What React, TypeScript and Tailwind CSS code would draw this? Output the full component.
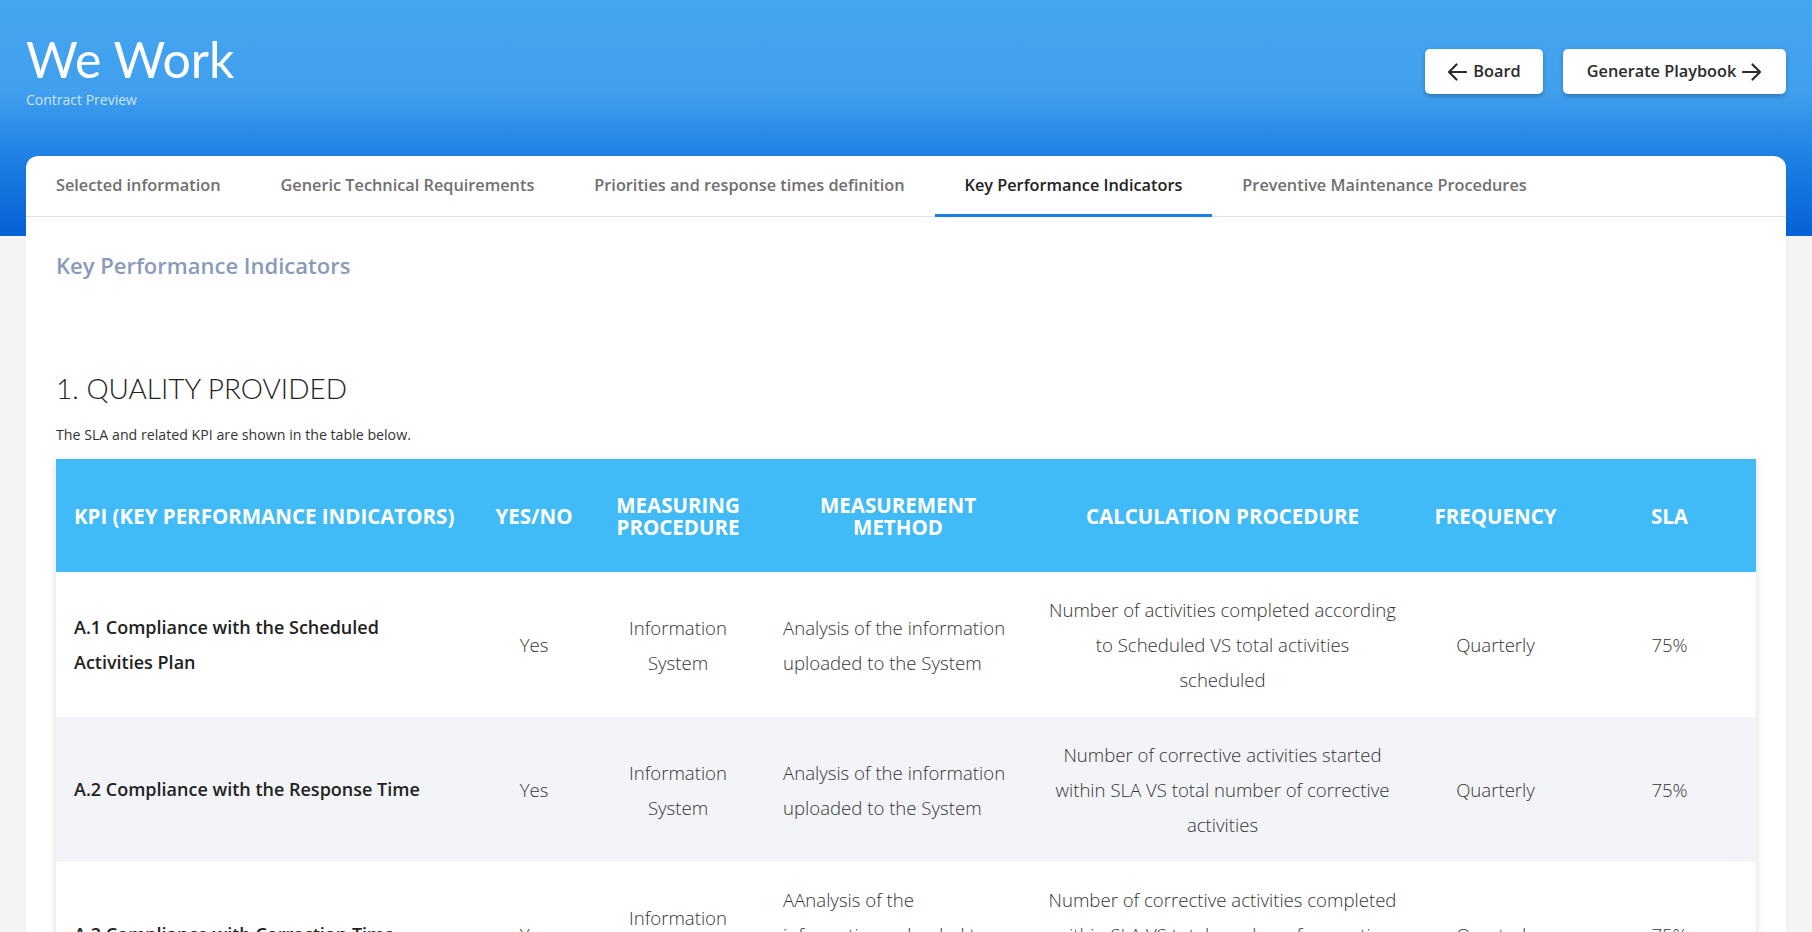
import { ReactNode } from 'react'

const TABS = [
  'Selected information',
  'Generic Technical Requirements',
  'Priorities and response times definition',
  'Key Performance Indicators',
  'Preventive Maintenance Procedures',
]

// lines are kept as in the contract preview so the cells wrap the same way
const ROWS = [
  {
    kpi: 'A.1 Compliance with the Scheduled Activities Plan',
    yes: 'Yes',
    procedure: ['Information', 'System'],
    method: ['Analysis of the information', 'uploaded to the System'],
    calc: ['Number of activities completed according', 'to Scheduled VS total activities', 'scheduled'],
    frequency: 'Quarterly',
    sla: '75%',
  },
  {
    kpi: 'A.2 Compliance with the Response Time',
    yes: 'Yes',
    procedure: ['Information', 'System'],
    method: ['Analysis of the information', 'uploaded to the System'],
    calc: ['Number of corrective activities started', 'within SLA VS total number of corrective', 'activities'],
    frequency: 'Quarterly',
    sla: '75%',
  },
  {
    kpi: 'A.3 Compliance with Correction Time',
    yes: 'Yes',
    procedure: ['Information', 'System'],
    method: ['AAnalysis of the', 'information uploaded to', 'the System'],
    calc: ['Number of corrective activities completed', 'within SLA VS total number of corrective', 'activities'],
    frequency: 'Quarterly',
    sla: '75%',
  },
]

function ArrowLeft() {
  return (
    <svg width="20" height="18" viewBox="0 0 20 18" fill="none" stroke="#2b2b2b" strokeWidth="2.2" strokeLinecap="round" strokeLinejoin="round">
      <path d="M19 9H2M9.5 1.5L2 9l7.5 7.5" />
    </svg>
  )
}

function ArrowRight() {
  return (
    <svg width="20" height="18" viewBox="0 0 20 18" fill="none" stroke="#2b2b2b" strokeWidth="2.2" strokeLinecap="round" strokeLinejoin="round">
      <path d="M1 9h17M10.5 1.5L18 9l-7.5 7.5" />
    </svg>
  )
}

function HeaderButton({ children, width }: { children: ReactNode; width: string }) {
  return (
    <button
      className={`${width} h-[45px] flex items-center justify-center gap-[6px] bg-white rounded-[5px] shadow-[0_2px_4px_rgba(0,0,0,0.25)] text-[16.3px] font-semibold text-[#2b2b2b]`}
    >
      {children}
    </button>
  )
}

function Lines({ lines }: { lines: string[] }) {
  return (
    <>
      {lines.map((l) => (
        <span key={l} className="block whitespace-nowrap">
          {l}
        </span>
      ))}
    </>
  )
}

export default function App() {
  return (
    <div className="min-h-screen bg-[#f4f4f4] font-['Open_Sans','Lato',sans-serif]">
      {/* Blue header */}
      <div className="h-[236px] px-[26px] pt-[34px] flex justify-between items-start bg-[linear-gradient(to_bottom,#44a5f0_0%,#41a0ee_38%,#1a7de2_70%,#0561d6_100%)]">
        <div>
          <h1 className="font-['Lato',sans-serif] text-[50px] leading-[50px] text-white">We Work</h1>
          <p className="mt-[7px] text-[14px] leading-[18px] text-white/75">Contract Preview</p>
        </div>
        <div className="mt-[15px] flex gap-5">
          <HeaderButton width="w-[118px]">
            <ArrowLeft />
            <span>Board</span>
          </HeaderButton>
          <HeaderButton width="w-[223px]">
            <span>Generate Playbook</span>
            <ArrowRight />
          </HeaderButton>
        </div>
      </div>

      {/* Card */}
      <div className="-mt-[80px] px-[26px]">
        <div className="bg-white rounded-t-[12px] shadow-[0_0_2px_rgba(0,0,0,0.08)] pb-10">
          {/* Tabs */}
          <div className="h-[61px] flex border-b border-[#e2e2e2]">
            {TABS.map((tab) => {
              const active = tab === 'Key Performance Indicators'
              return (
                <div
                  key={tab}
                  className={`px-[30px] flex items-center text-[16.3px] font-semibold -mb-px border-b-[3px] ${
                    active ? 'border-[#1b7de6] text-[#222]' : 'border-transparent text-[#707070]'
                  }`}
                >
                  {tab}
                </div>
              )
            })}
          </div>

          <div className="px-[30px]">
            <h2 className="pt-[34px] text-[22px] leading-[28px] font-semibold text-[#8a9bb9]">
              Key Performance Indicators
            </h2>

            <h3 className="mt-[91px] font-['Lato',sans-serif] text-[28px] leading-[36px] font-light text-[#222]">
              1. QUALITY PROVIDED
            </h3>
            <p className="mt-[19px] text-[14.2px] leading-[20px] text-[#333]">
              The SLA and related KPI are shown in the table below.
            </p>

            <table className="mt-[14px] w-full table-fixed border-collapse shadow-[0_2px_8px_rgba(0,0,0,0.14)]">
              <colgroup>
                <col className="w-[415px]" />
                <col className="w-[126px]" />
                <col className="w-[162px]" />
                <col className="w-[278px]" />
                <col className="w-[371px]" />
                <col className="w-[175px]" />
                <col />
              </colgroup>
              <thead>
                <tr className="h-[113px] bg-[#41bbf7] text-white text-[20.5px] leading-[22px] font-bold uppercase">
                  <th className="px-[18px] text-left whitespace-nowrap">KPI (Key Performance Indicators)</th>
                  <th className="px-[10px] text-center">Yes/No</th>
                  <th className="px-[10px] text-center">Measuring Procedure</th>
                  <th className="px-[24px] text-center">Measurement Method</th>
                  <th className="px-[8px] text-center">Calculation Procedure</th>
                  <th className="px-[10px] text-center">Frequency</th>
                  <th className="px-[10px] text-center">SLA</th>
                </tr>
              </thead>
              <tbody className="text-[18.6px] leading-[35px] font-light text-[#333]">
                {ROWS.map((row, i) => (
                  <tr key={row.kpi} className={`h-[145px] ${i % 2 === 1 ? 'bg-[#f3f4f8]' : 'bg-white'}`}>
                    <td className="px-[18px] text-[18px] font-semibold text-[#222]">{row.kpi}</td>
                    <td className="px-[10px] text-center">{row.yes}</td>
                    <td className="px-[10px] text-center">
                      <Lines lines={row.procedure} />
                    </td>
                    <td className="px-[24px] text-left">
                      <Lines lines={row.method} />
                    </td>
                    <td className="px-[8px] text-center">
                      <Lines lines={row.calc} />
                    </td>
                    <td className="px-[10px] text-center">{row.frequency}</td>
                    <td className="px-[10px] text-center">{row.sla}</td>
                  </tr>
                ))}
              </tbody>
            </table>
          </div>
        </div>
      </div>
    </div>
  )
}
